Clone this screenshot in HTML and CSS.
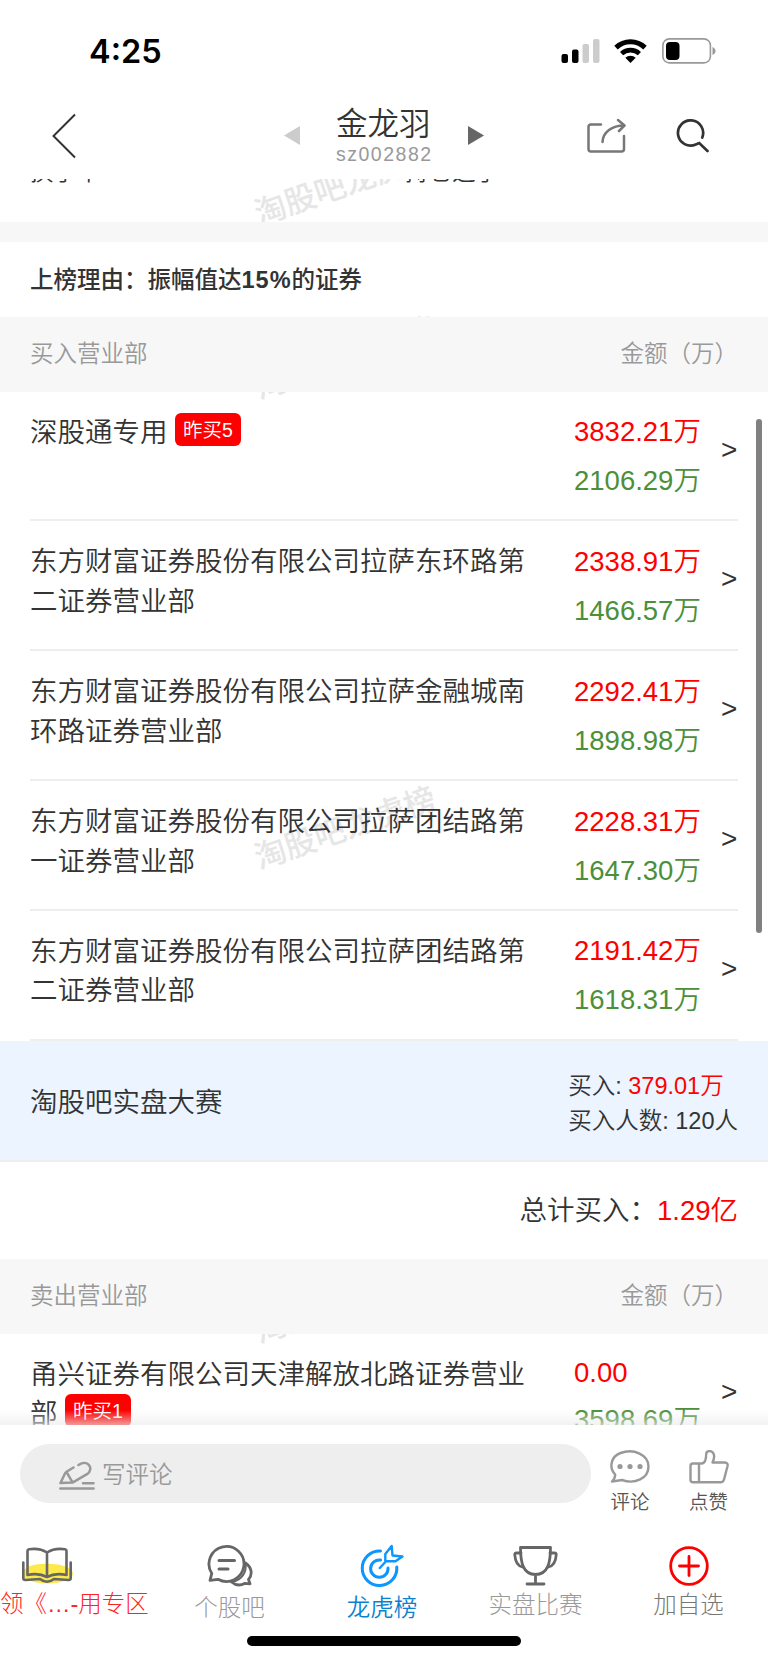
FILE: index.html
```html
<!DOCTYPE html>
<html lang="zh-CN">
<head>
    <meta charset="UTF-8">
    <meta name="viewport" content="width=device-width, initial-scale=1.0">
    <title>金龙羽 sz002882</title>
    <link rel="stylesheet" href="styles.css">
</head>
<body>
    <div class="status-bar">
        <span class="time">4:25</span>
        <div class="status-icons">
            <svg class="signal" width="39" height="24" viewBox="0 0 39 24">
                <rect x="0.500" y="15" width="6.500" height="9" rx="2"/>
                <rect x="11" y="10.500" width="6.500" height="13.500" rx="2"/>
                <rect x="21.500" y="5" width="6.500" height="19" rx="2" fill="#ccc"/>
                <rect x="32" y="0" width="6.500" height="24" rx="2" fill="#ccc"/>
            </svg>
            <svg class="wifi" width="33" height="24" viewBox="0 0 33 24">
                <path d="M2 8.600a21 21 0 0 1 29 0" fill="none" stroke="#000" stroke-width="5"/>
                <path d="M7.600 14.600a13 13 0 0 1 17.800 0" fill="none" stroke="#000" stroke-width="4.600"/>
                <path d="M16.500 24l-5.200-5.200a7.600 7.600 0 0 1 10.400 0z"/>
            </svg>
            <svg class="battery" width="54" height="26" viewBox="0 0 54 26">
                <rect x="0.900" y="0.900" width="47.500" height="24" rx="6.500" fill="none" stroke="#999" stroke-width="1.600"/>
                <rect x="4" y="4" width="13.500" height="18" rx="4"/>
                <path d="M50.500 9v8c4-1.500 4-6.500 0-8z" fill="#999"/>
            </svg>
        </div>
    </div>

    <header class="nav">
        <svg class="back" width="24" height="46" viewBox="0 0 24 46">
            <path d="M23 1.500L1.500 23 23 44.500" fill="none" stroke="#333" stroke-width="2"/>
        </svg>
        <svg class="prev" width="16" height="19" viewBox="0 0 16 19"><path d="M16 0v19L0 9.500z" fill="#ccc"/></svg>
        <div class="title">
            <h1>金龙羽</h1>
            <p>sz002882</p>
        </div>
        <svg class="next" width="16" height="19" viewBox="0 0 16 19"><path d="M0 0v19l16-9.500z" fill="#666"/></svg>
        <svg class="share" width="39" height="36" viewBox="0 0 39 36" fill="none" stroke="#777" stroke-width="2.500" stroke-linecap="round" stroke-linejoin="round">
            <path d="M14 6.500H4a2.500 2.500 0 0 0-2.500 2.500v22A2.500 2.500 0 0 0 4 33.500h30.500a2.500 2.500 0 0 0 2.500-2.500V18"/>
            <path d="M15.500 24C16 14 25 7.500 37 7.500M31 2l6.500 5.500-5.500 5.500"/>
        </svg>
        <svg class="search" width="35" height="35" viewBox="0 0 35 35" fill="none" stroke="#333" stroke-width="2.700" stroke-linecap="round">
            <path d="M26.300 18.500A12.600 12.600 0 1 0 19.800 25.400L23.200 24L31.500 32"/>
        </svg>
    </header>

    <main class="content">
        <div class="watermark wm-1">淘股吧龙虎榜</div>
        <div class="watermark wm-2">淘股吧龙虎榜</div>
        <div class="watermark wm-3">淘股吧龙虎榜</div>
        <div class="watermark wm-4">淘股吧龙虎榜</div>

        <div class="stats">
            <span>换手率</span>
            <span>持仓选手</span>
        </div>
        <div class="gap"></div>
        <h2 class="reason">上榜理由：振幅值达<b>15%</b>的证券</h2>

        <div class="list-head"><span>买入营业部</span><span>金额（万）</span></div>
        <ul class="list">
            <li class="row">
                <div class="name">深股通专用<span class="tag">昨买5</span></div>
                <div class="amount"><p class="buy">3832.21万</p><p class="sell">2106.29万</p></div>
                <span class="arrow">&gt;</span>
            </li>
            <li class="row">
                <div class="name">东方财富证券股份有限公司拉萨东环路第二证券营业部</div>
                <div class="amount"><p class="buy">2338.91万</p><p class="sell">1466.57万</p></div>
                <span class="arrow">&gt;</span>
            </li>
            <li class="row">
                <div class="name">东方财富证券股份有限公司拉萨金融城南环路证券营业部</div>
                <div class="amount"><p class="buy">2292.41万</p><p class="sell">1898.98万</p></div>
                <span class="arrow">&gt;</span>
            </li>
            <li class="row">
                <div class="name">东方财富证券股份有限公司拉萨团结路第一证券营业部</div>
                <div class="amount"><p class="buy">2228.31万</p><p class="sell">1647.30万</p></div>
                <span class="arrow">&gt;</span>
            </li>
            <li class="row">
                <div class="name">东方财富证券股份有限公司拉萨团结路第二证券营业部</div>
                <div class="amount"><p class="buy">2191.42万</p><p class="sell">1618.31万</p></div>
                <span class="arrow">&gt;</span>
            </li>
        </ul>

        <div class="contest">
            <span class="contest-name">淘股吧实盘大赛</span>
            <div class="contest-info">
                <p>买入: <span class="buy">379.01万</span></p>
                <p>买入人数: 120人</p>
            </div>
        </div>
        <div class="total">总计买入：<span class="buy">1.29亿</span></div>

        <div class="list-head"><span>卖出营业部</span><span>金额（万）</span></div>
        <ul class="list">
            <li class="row">
                <div class="name">甬兴证券有限公司天津解放北路证券营业部<span class="tag">昨买1</span></div>
                <div class="amount zero"><p class="buy">0.00</p><p class="sell">3598.69万</p></div>
                <span class="arrow">&gt;</span>
            </li>
        </ul>
        <div class="scrollbar"></div>
        <div class="fade"></div>
    </main>

    <footer class="bottom">
        <div class="comment-bar">
            <div class="comment-input">
                <svg width="36" height="29" viewBox="0 0 36 29" fill="none" stroke="#999" stroke-width="2.500" stroke-linecap="round" stroke-linejoin="round">
                    <path d="M14.500 6.500L7.500 10.800Q6 12 5 14.500L1.500 22L13.500 21.600L28 13.200C35.500 8 29-2.500 19.500 4M7.800 11.500L13.500 21.300"/>
                    <path d="M24 22.300h10.500M1.300 27.500h33.300"/>
                </svg>
                <span>写评论</span>
            </div>
            <div class="action">
                <svg width="40" height="34" viewBox="0 0 40 34" fill="none" stroke="#999" stroke-width="2.400" stroke-linejoin="round">
                    <path d="M5.200 24.500C-1.500 17.500 1 6.500 10.500 3C24-2 38.500 5 38.500 16.500C38.500 28.500 25 34.500 12 30L2 31.500C4 29.500 5.200 27.500 5.200 24.500z"/>
                    <g fill="#999" stroke="none"><circle cx="10" cy="16.500" r="2.600"/><circle cx="20" cy="16.500" r="2.600"/><circle cx="30" cy="16.500" r="2.600"/></g>
                </svg>
                <span>评论</span>
            </div>
            <div class="action">
                <svg width="40" height="34" viewBox="0 0 40 34" fill="none" stroke="#999" stroke-width="2.400" stroke-linejoin="round">
                    <path d="M10 13.500H13C16 13 17.200 9 17.200 4C17.200 0.500 23.500-0.500 25 5C25.500 8 24.500 10.500 23.500 12.500H36C38.200 12.500 39 14 38.500 16.200L35 29.500C34.500 31.500 33.500 32.300 31.500 32.300H4C2.200 32.300 1.500 31.500 1.500 30V16C1.500 14.200 2.500 13.500 4 13.500zM10 13.500V32"/>
                </svg>
                <span>点赞</span>
            </div>
        </div>
        <nav class="tabs">
            <a class="tab tab-book">
                <svg width="52" height="42" viewBox="0 0 52 42" fill="none" stroke="#666" stroke-width="2.600" stroke-linecap="round" stroke-linejoin="round">
                    <ellipse cx="26.500" cy="28.500" rx="25.500" ry="10" fill="#fde94b" stroke="none"/>
                    <path d="M26 7.500C20 3.500 13 3.500 8 4.200Q6.500 4.500 6.500 6V30C13 28.500 20 28.800 26 32C32 28.800 39 28.500 45.500 30V6Q45.500 4.500 44 4.200C39 3.500 32 3.500 26 7.500z" fill="#fff" stroke="none"/>
                    <path d="M6.500 30V22C15 17.500 37 17.500 45.500 22V30C39 28.500 32 29 26 32C20 29 13 28.500 6.500 30z" fill="#fde94b" stroke="none"/>
                    <path d="M26 7.500C20 3.500 13 3.500 8 4.200Q6.500 4.500 6.500 6V30C13 28.500 20 28.800 26 32C32 28.800 39 28.500 45.500 30V6Q45.500 4.500 44 4.200C39 3.500 32 3.500 26 7.500zV32"/>
                    <path d="M2.300 17.500V33Q2.300 35 4.500 35L19 34Q26 39.500 33 34L47.500 35Q49.700 35 49.700 33V17.500"/>
                </svg>
                <span>领《…-用专区</span>
            </a>
            <a class="tab tab-forum">
                <svg width="46" height="42" viewBox="0 0 46 42" fill="none" stroke="#666" stroke-width="2.800" stroke-linecap="round" stroke-linejoin="round">
                    <path d="M38.500 18C45 22.500 45.800 29.500 41.500 34.500L43 38.800L38 38.300C33 41 28 40 24.500 37"/>
                    <path d="M38.500 18C40 27 35 35 25 37" stroke-width="2"/>
                    <path d="M4.800 28.500A17.500 17.500 0 1 1 11 34.300L3 35.300z"/>
                    <path d="M12 15.500h15.500M12 24h9" stroke-width="3"/>
                </svg>
                <span>个股吧</span>
            </a>
            <a class="tab tab-board">
                <svg width="46" height="44" viewBox="0 0 46 44" fill="none" stroke="#0c96ff" stroke-width="3" stroke-linecap="round" stroke-linejoin="round">
                    <path d="M21.500 7A17.300 17.300 0 1 0 37.800 23"/>
                    <path d="M21.500 16A8.700 8.700 0 1 0 29 24"/>
                    <path d="M20.800 24L27 17.200M32.700 2L26.300 10V17.200H36.500L43.500 12.500L33.500 11.500z" stroke-width="2.400"/>
                </svg>
                <span>龙虎榜</span>
            </a>
            <a class="tab tab-contest">
                <svg width="45" height="41" viewBox="0 0 45 41" fill="none" stroke="#666" stroke-width="2.800" stroke-linecap="round" stroke-linejoin="round">
                    <path d="M7.500 2H37.500C37.500 17 35 29 22.500 29C10 29 7.500 17 7.500 2zM22.500 29V38.500M14 38.500h17"/>
                    <path d="M8 7.500H3.500Q1.500 7.500 1.800 9.500C2.200 15 4.500 20.500 9.500 21.500M37 7.500H41.500Q43.500 7.500 43.200 9.500C42.800 15 40.500 20.500 35.500 21.500"/>
                </svg>
                <span>实盘比赛</span>
            </a>
            <a class="tab tab-add">
                <svg width="40" height="40" viewBox="0 0 40 40" fill="none" stroke="#f00" stroke-width="2.800" stroke-linecap="round">
                    <circle cx="20" cy="20" r="18.300"/>
                    <path d="M10.500 20h19M20 10.500v19"/>
                </svg>
                <span>加自选</span>
            </a>
        </nav>
        <div class="home-indicator"></div>
    </footer>
</body>
</html>
```

FILE: styles.css
```css
* {
    margin: 0;
    padding: 0;
    box-sizing: border-box;
}

body {
    width: 768px;
    height: 1663px;
    overflow: hidden;
    display: flex;
    flex-direction: column;
    background: #fff;
    color: #333;
    font-family: "Liberation Sans", "Noto Sans CJK SC", sans-serif;
    font-weight: 350;
}

svg {
    display: block;
    flex: none;
}

/* Status bar */
.status-bar {
    height: 93px;
    padding: 0 52px 0 89px;
    display: flex;
    justify-content: space-between;
}

.time {
    margin-top: 31px;
    color: #000;
    font-family: Inter, sans-serif;
    font-size: 32.5px;
    font-weight: 600;
    line-height: 41px;
}

.status-icons {
    display: flex;
    align-items: flex-start;
    padding-top: 39px;
}

.wifi {
    margin-left: 14px;
}

.battery {
    margin: -1px 0 0 15px;
}

/* Title bar */
.nav {
    height: 86px;
    padding-bottom: 1px;
    display: flex;
    align-items: center;
}

.back {
    margin-left: 52px;
}

.prev {
    margin-left: 208px;
}

.title {
    width: 96px;
    margin: 0 36px;
    white-space: nowrap;
}

.title h1 {
    font-size: 31.5px;
    font-weight: 350;
    line-height: 36px;
}

.title p {
    color: #999;
    font-size: 19.5px;
    letter-spacing: 1.5px;
    line-height: 24px;
}

.share {
    margin-left: 103px;
}

.search {
    margin: 1px 0 0 50px;
}

/* Scrolling content */
.content {
    position: relative;
    height: 1246px;
    overflow: hidden;
}

.watermark {
    position: absolute;
    left: 245px;
    width: 200px;
    color: #e6e6e6;
    font-size: 31.5px;
    font-weight: 500;
    line-height: 40px;
    text-align: center;
    white-space: nowrap;
    transform: rotate(-19deg);
    z-index: -1;
}

.wm-1 { top: -15px; }
.wm-2 { top: 159px; }
.wm-3 { top: 629px; }
.wm-4 { top: 1103px; }

.stats {
    height: 43px;
    padding-left: 30px;
    display: grid;
    grid-template-columns: 375px 1fr;
    font-size: 23.5px;
    line-height: 24px;
}

.stats span {
    margin-top: -19px;
}

.gap {
    height: 20px;
    background: #f7f7f7;
}

.reason {
    height: 75px;
    padding-left: 30px;
    font-size: 23.5px;
    font-weight: 500;
    line-height: 76px;
}

.reason b {
    letter-spacing: 1px;
}

.list-head {
    height: 74.5px;
    padding: 0 30px;
    display: flex;
    justify-content: space-between;
    background: #f7f7f7;
    color: #999;
    font-size: 23.5px;
    line-height: 75px;
}

.list {
    list-style: none;
    padding: 0 30px;
}

.row {
    height: 129.85px;
    display: flex;
    border-bottom: 2px solid #eee;
    font-size: 27.5px;
}

.name {
    width: 500px;
    padding-top: 21px;
    line-height: 39.5px;
}

.tag {
    display: inline-block;
    height: 33px;
    margin: -8px 0 -8px 7.5px;
    padding: 0 8px;
    border-radius: 6px;
    background: #f00;
    color: #fff;
    font-size: 19.5px;
    line-height: 34px;
    vertical-align: 5px;
}

.amount {
    width: 147px;
    margin-left: 44px;
    padding-top: 15.5px;
    line-height: 49px;
}

.zero {
    padding-top: 14px;
}

.zero .sell {
    margin-top: -2px;
}

.buy {
    color: #f00;
}

.sell {
    color: #4c8f3a;
}

.arrow {
    padding-top: 38px;
    font-size: 28px;
    line-height: 40px;
}

.contest {
    height: 121px;
    padding: 0 30px;
    display: flex;
    justify-content: space-between;
    align-items: center;
    background: #ebf4ff;
    border-bottom: 2px solid #eee;
    font-size: 27.5px;
}

.contest-info {
    font-size: 23.5px;
    line-height: 35.5px;
    margin-top: 8px;
}

.total {
    height: 97.5px;
    padding-right: 30px;
    font-size: 27.5px;
    line-height: 98px;
    text-align: right;
}

.scrollbar {
    position: absolute;
    top: 240px;
    right: 6px;
    width: 6px;
    height: 514px;
    border-radius: 3px;
    background: #808080;
}

.fade {
    position: absolute;
    left: 0;
    right: 0;
    bottom: 0;
    height: 15px;
    background: linear-gradient(to bottom, rgba(240, 240, 240, 0), rgba(235, 235, 235, 0.65));
}

/* Bottom bar */
.bottom {
    flex: 1;
    background: #fff;
}

.comment-bar {
    height: 99px;
    padding: 19px 39px 0 20px;
    display: flex;
    color: #555;
    font-size: 19.5px;
}

.comment-input {
    width: 571px;
    height: 59px;
    padding-left: 39px;
    display: flex;
    align-items: center;
    gap: 7px;
    border-radius: 30px;
    background: #eee;
    color: #999;
    font-size: 23.5px;
}

.comment-input svg {
    margin-top: 3px;
}

.comment-input span {
    margin-top: -2px;
}

.action {
    width: 40px;
    margin: 6px 0 0 19px;
    text-align: center;
    line-height: 36px;
}

.action + .action {
    margin-left: 38.5px;
}

.tabs {
    width: 765px;
    height: 112px;
    display: grid;
    grid-template-columns: repeat(5, 153px);
    font-weight: 300;
}

.tab {
    display: flex;
    flex-direction: column;
    align-items: center;
    color: #999;
    font-size: 23.5px;
    line-height: 30px;
    white-space: nowrap;
}

.tab svg {
    height: 46px;
    margin-top: 19px;
}

.tab-book {
    color: #f22;
    align-items: flex-start;
}

.tab-book svg {
    margin-left: 21px;
}

.tab-forum span,
.tab-board span {
    margin-top: 4px;
}

.tab-board {
    color: #0c82cf;
    font-weight: 350;
    padding-right: 1px;
}

.tab-contest span,
.tab-add span {
    margin-top: 1px;
}

.tab-add {
    color: #777;
}

.home-indicator {
    width: 274px;
    height: 10px;
    margin: 0 auto;
    border-radius: 5px;
    background: #000;
}
```
